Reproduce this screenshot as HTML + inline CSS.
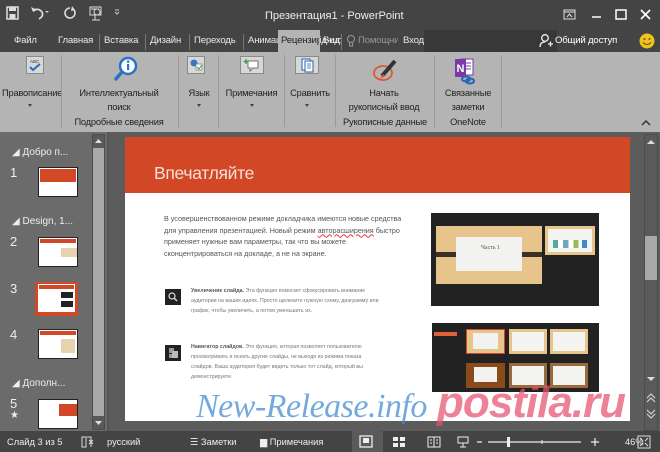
<!DOCTYPE html>
<html><head><meta charset="utf-8"><style>
*{margin:0;padding:0;box-sizing:border-box}
body{width:660px;height:452px;overflow:hidden;background:#5f5f5f;font-family:"Liberation Sans","DejaVu Sans",sans-serif;position:relative}
.a{position:absolute}
.t{color:#fff;font-size:11px;white-space:nowrap}
.tab{position:absolute;top:35px;font-size:9.6px;letter-spacing:-0.2px;color:#e8e8e8;white-space:nowrap}
.sep{position:absolute;top:34px;width:1px;height:16px;background:#777}
.rb{position:absolute;font-size:9.3px;letter-spacing:-0.2px;color:#222;text-align:center;white-space:nowrap;line-height:14px}
.rsep{position:absolute;top:55px;width:1px;height:72px;background:#999}
.ibox{position:absolute;background:#d8d8d8;border:1px solid #8a8a8a}
.arr{position:absolute;width:0;height:0;border-left:2.5px solid transparent;border-right:2.5px solid transparent;border-top:3px solid #444}
.thumb{position:absolute;left:38px;width:40px;height:30px;background:#fff;border:1px solid #222}
.num{position:absolute;left:10px;color:#eee;font-size:13px}
.sec{position:absolute;left:12px;color:#eee;font-size:10px;white-space:nowrap}
.st{position:absolute;top:437px;color:#eee;font-size:9.3px;white-space:nowrap}
.sm{font-size:5.3px;color:#777;line-height:10px}
</style></head><body>
<div class="a" style="left:0;top:0;width:660px;height:52px;background:#444"></div>
<svg class="a" style="left:0;top:0" width="130" height="28">
<rect x="7" y="7" width="11" height="12" fill="none" stroke="#ddd" stroke-width="1.5"/><rect x="9" y="7" width="7" height="4" fill="#ddd"/><rect x="9.5" y="14" width="6" height="5" fill="#ddd"/>
<path d="M33 10 q6 -2 9 2 q2 4 -3 7" stroke="#ddd" fill="none" stroke-width="1.6"/><path d="M31 7 l2 5 l4 -2z" fill="#ddd"/>
<path d="M45 11 l2 2 l2 -2z" fill="#ccc"/>
<path d="M70 8 a5 5 0 1 0 4 2" stroke="#ddd" fill="none" stroke-width="1.6"/><path d="M72 6 l3 4 l-4 1z" fill="#ddd"/>
<rect x="90" y="7" width="11" height="8" fill="none" stroke="#ddd"/><circle cx="97" cy="12" r="3" fill="none" stroke="#ddd"/><path d="M95 15 v5 M92 20 h8" stroke="#ddd"/>
<path d="M91 9 h8" stroke="#ddd"/>
<path d="M115 10 h4 M115 12 l2 2 l2 -2" stroke="#ccc" fill="none"/>
</svg>
<div class="t a" style="left:265px;top:10px;font-size:11px;color:#eee">Презентация1 - PowerPoint</div>
<svg class="a" style="left:560px;top:6px" width="100" height="20">
<rect x="4" y="4" width="11" height="9" fill="none" stroke="#ddd"/><path d="M4 6 h11 M7 11 l2.5 -3 l2.5 3" stroke="#ddd" fill="none"/>
<path d="M32 11 h9" stroke="#fff" stroke-width="1.5"/>
<rect x="56" y="4" width="10" height="9" fill="none" stroke="#fff" stroke-width="1.5"/>
<path d="M81 4 l9 9 M90 4 l-9 9" stroke="#fff" stroke-width="1.7"/>
</svg>
<div class="tab" style="left:14px">Файл</div>
<div class="tab" style="left:58px">Главная</div><div class="sep" style="left:99px"></div>
<div class="tab" style="left:104px">Вставка</div><div class="sep" style="left:145px"></div>
<div class="tab" style="left:150px">Дизайн</div><div class="sep" style="left:189px"></div>
<div class="tab" style="left:194px">Переходь</div><div class="sep" style="left:243px"></div>
<div class="tab" style="left:248px;width:45px;overflow:hidden">Анимации</div><div class="sep" style="left:294px"></div>
<div class="tab" style="left:299px;width:43px;overflow:hidden">Слайд-шоу</div>
<div class="a" style="left:278px;top:30px;width:42px;height:22px;background:#b4b4b4"></div>
<div class="tab" style="left:281px;color:#222;width:38px;overflow:hidden">Рецензир</div>
<div class="tab" style="left:323px">Вид</div><div class="sep" style="left:341px"></div>
<svg class="a" style="left:346px;top:33px" width="10" height="16"><circle cx="5" cy="6" r="3.5" fill="none" stroke="#999"/><path d="M3.5 10 v3 h3 v-3" stroke="#999" fill="none"/></svg>
<div class="tab" style="left:358px;color:#999;width:40px;overflow:hidden">Помощник</div>
<div class="tab" style="left:403px">Вход</div>
<div class="a" style="left:424px;top:30px;width:133px;height:22px;background:#383838"></div>
<svg class="a" style="left:539px;top:33px" width="14" height="16"><circle cx="6" cy="5" r="3.3" fill="none" stroke="#eee" stroke-width="1.3"/><path d="M1 14 q0 -5 5 -5 M9 11 h5 M11.5 8.5 v5" stroke="#eee" fill="none" stroke-width="1.3"/></svg>
<div class="tab" style="left:555px;color:#fff">Общий доступ</div>
<svg class="a" style="left:638px;top:32px" width="18" height="18"><circle cx="9" cy="9" r="7.5" fill="#f2c21b"/><circle cx="6.5" cy="7" r="1" fill="#553"/><circle cx="11.5" cy="7" r="1" fill="#553"/><path d="M5 10.5 q4 4 8 0" stroke="#553" fill="none"/></svg>
<div class="a" style="left:0;top:52px;width:660px;height:80px;background:#b4b4b4"></div>
<div class="ibox" style="left:26px;top:56px;width:18px;height:18px"></div>
<svg class="a" style="left:26px;top:56px" width="18" height="18"><text x="4" y="7" font-size="4.5" fill="#333" font-family="Liberation Sans">ABC</text><path d="M4 11 l3 3 l7 -6" stroke="#2a6ebb" stroke-width="2" fill="none"/></svg>
<div class="rb" style="left:2px;top:86px;width:56px">Правописание</div><div class="arr" style="left:28px;top:104px"></div>
<div class="rsep" style="left:61px"></div>
<svg class="a" style="left:112px;top:55px" width="28" height="30"><circle cx="16" cy="11" r="8" fill="#fff" stroke="#2a72c4" stroke-width="2.5"/><rect x="15" y="9" width="2.2" height="6" fill="#2a72c4"/><circle cx="16.1" cy="6.5" r="1.3" fill="#2a72c4"/><path d="M10 17 l-7 8" stroke="#2a72c4" stroke-width="3.5"/></svg>
<div class="rb" style="left:65px;top:86px;width:108px">Интеллектуальный<br>поиск</div>
<div class="rb" style="left:63px;top:115px;width:112px">Подробные сведения</div>
<div class="rsep" style="left:178px"></div>
<div class="ibox" style="left:187px;top:56px;width:18px;height:18px"></div>
<svg class="a" style="left:187px;top:56px" width="18" height="18"><circle cx="7" cy="7" r="3.5" fill="#3a76c6"/><rect x="9" y="8" width="6" height="6" fill="#fff" stroke="#666" stroke-width=".6"/><path d="M10 11 l2 2 l3 -4" stroke="#2a9c3a" fill="none"/></svg>
<div class="rb" style="left:181px;top:86px;width:36px">Язык</div><div class="arr" style="left:197px;top:104px"></div>
<div class="rsep" style="left:218px"></div>
<div class="ibox" style="left:240px;top:56px;width:24px;height:18px"></div>
<svg class="a" style="left:240px;top:56px" width="24" height="18"><rect x="8" y="5" width="10" height="7" fill="#fff" stroke="#555" stroke-width=".8"/><path d="M10 12 v3 l3 -3" fill="#fff" stroke="#555" stroke-width=".8"/><path d="M6 3 v5 M3.5 5.5 h5" stroke="#2a9c3a" stroke-width="1.3"/></svg>
<div class="rb" style="left:220px;top:86px;width:63px">Примечания</div><div class="arr" style="left:250px;top:104px"></div>
<div class="rsep" style="left:284px"></div>
<div class="ibox" style="left:295px;top:56px;width:24px;height:18px"></div>
<svg class="a" style="left:295px;top:56px" width="24" height="18"><rect x="7" y="3" width="8" height="11" fill="#fff" stroke="#2a60a8"/><rect x="10" y="5" width="8" height="11" fill="#fff" stroke="#2a60a8"/><path d="M12 8 h4 M12 10 h4 M12 12 h4" stroke="#2a60a8" stroke-width=".7"/></svg>
<div class="rb" style="left:286px;top:86px;width:48px">Сравнить</div><div class="arr" style="left:305px;top:104px"></div>
<div class="rsep" style="left:335px"></div>
<svg class="a" style="left:370px;top:56px" width="30" height="28"><ellipse cx="13" cy="17" rx="9" ry="7" fill="none" stroke="#e0502a" stroke-width="1.6"/><path d="M12 20 l13 -15" stroke="#333" stroke-width="4"/><path d="M10 23 l3 -5 l2 2z" fill="#e0502a"/></svg>
<div class="rb" style="left:338px;top:86px;width:92px">Начать<br>рукописный ввод</div>
<div class="rb" style="left:337px;top:115px;width:96px">Рукописные данные</div>
<div class="rsep" style="left:434px"></div>
<svg class="a" style="left:453px;top:56px" width="26" height="30"><rect x="8" y="3" width="12" height="16" fill="#fff" stroke="#7a3aa8"/><path d="M12 7 h6 M12 10 h6 M12 13 h6" stroke="#7a3aa8"/><rect x="2" y="3" width="11" height="18" fill="#7a3aa8"/><text x="3.5" y="16" font-size="11" fill="#fff" font-family="Liberation Sans" font-weight="bold">N</text><ellipse cx="13" cy="23" rx="4" ry="2.5" fill="none" stroke="#2a66b8" stroke-width="2"/><ellipse cx="17" cy="25" rx="4" ry="2.5" fill="none" stroke="#2a66b8" stroke-width="2"/></svg>
<div class="rb" style="left:437px;top:86px;width:62px">Связанные<br>заметки</div>
<div class="rb" style="left:437px;top:115px;width:62px">OneNote</div>
<div class="rsep" style="left:501px"></div>
<svg class="a" style="left:640px;top:118px" width="12" height="10"><path d="M2 7 l4 -4 l4 4" stroke="#333" fill="none" stroke-width="1.5"/></svg>
<div class="a" style="left:0;top:132px;width:660px;height:299px;background:#5c5c5c"></div>
<div class="a" style="left:0;top:132px;width:107px;height:299px;background:#6b6b6b"></div>
<div class="a" style="left:107px;top:132px;width:2px;height:299px;background:#555"></div>
<div class="a" style="left:92px;top:134px;width:13px;height:296px;background:#5a5a5a;border:1px solid #4c4c4c"></div>
<div class="a" style="left:93px;top:148px;width:11px;height:268px;background:#a9a9a9"></div>
<svg class="a" style="left:92px;top:134px" width="13" height="296"><path d="M3 9 l3.5 -4 l3.5 4z" fill="#ddd"/><path d="M3 287 l3.5 4 l3.5 -4z" fill="#ddd"/></svg>
<div class="sec" style="top:147px">◢ Добро п...</div>
<div class="num" style="top:165px">1</div>
<div class="thumb" style="top:167px"><div style="height:13px;background:#d24726;margin:1px"></div></div>
<div class="sec" style="top:216px">◢ Design, 1...</div>
<div class="num" style="top:234px">2</div>
<div class="thumb" style="top:237px"><div style="height:4px;background:#d24726;margin:1px"></div><div style="position:absolute;left:22px;top:10px;width:16px;height:9px;background:#e8d2b0"></div></div>
<div class="num" style="top:281px">3</div>
<div class="a" style="left:35px;top:282px;width:43px;height:34px;background:#d24726"></div>
<div class="thumb" style="top:284px;left:38px;width:37px;height:28px;border:none"><div style="height:4px;background:#d24726;margin:1px"></div><div style="position:absolute;left:23px;top:8px;width:12px;height:6px;background:#222"></div><div style="position:absolute;left:23px;top:17px;width:12px;height:6px;background:#222"></div></div>
<div class="num" style="top:327px">4</div>
<div class="thumb" style="top:329px"><div style="height:4px;background:#d24726;margin:1px"></div><div style="position:absolute;left:22px;top:9px;width:14px;height:14px;background:#e8d2b0"></div></div>
<div class="sec" style="top:378px">◢ Дополн...</div>
<div class="num" style="top:396px">5</div>
<div class="a" style="left:10px;top:410px;color:#eee;font-size:10px">★</div>
<div class="thumb" style="top:399px"><div style="position:absolute;left:20px;top:4px;width:18px;height:12px;background:#d24726"></div></div>
<div class="a" style="left:125px;top:137px;width:505px;height:284px;background:#fff"></div>
<div class="a" style="left:125px;top:137px;width:505px;height:56px;background:#d24726"></div>
<div class="a" style="left:154px;top:163px;color:#f6e0d8;font-size:17.5px;letter-spacing:-0.3px">Впечатляйте</div>
<div class="a" style="left:164px;top:213px;font-size:7.2px;color:#555;line-height:11.6px;width:260px">В усовершенствованном режиме докладчика имеются новые средства<br>для управления презентацией. Новый режим <span style="text-decoration:underline wavy #e33">авторасширения</span> быстро<br>применяет нужные вам параметры, так что вы можете<br>сконцентрироваться на докладе, а не на экране.</div>
<div class="a" style="left:165px;top:289px;width:16px;height:16px;background:#222"></div>
<svg class="a" style="left:165px;top:289px" width="16" height="16"><circle cx="7" cy="7" r="3" fill="none" stroke="#ddd" stroke-width="1.2"/><path d="M9 9 l3 3" stroke="#ddd" stroke-width="1.4"/></svg>
<div class="a sm" style="left:191px;top:286px;width:230px"><b style="color:#555">Увеличение слайда.</b> Эта функция помогает сфокусировать внимание<br>аудитории на ваших идеях. Просто щелкните нужную схему, диаграмму или<br>график, чтобы увеличить, а потом уменьшить их.</div>
<div class="a" style="left:165px;top:345px;width:16px;height:16px;background:#222"></div>
<svg class="a" style="left:165px;top:345px" width="16" height="16"><rect x="4" y="3" width="5" height="5" fill="#999"/><rect x="4" y="9" width="4" height="4" fill="#999"/><rect x="7" y="6" width="6" height="7" fill="#bbb"/></svg>
<div class="a sm" style="left:191px;top:342px;width:230px"><b style="color:#555">Навигатор слайдов.</b> Это функция, которая позволяет пользователю<br>просматривать и искать другие слайды, не выходя из режима показа<br>слайдов.  Ваша аудитория будет видеть только тот слайд, который вы<br>демонстрируете.</div>
<div class="a" style="left:431px;top:213px;width:168px;height:93px;background:#222"></div>
<div class="a" style="left:436px;top:226px;width:106px;height:58px;background:#e6c48c"></div>
<div class="a" style="left:456px;top:237px;width:66px;height:34px;background:#f2f2f0"></div>
<div class="a" style="left:436px;top:252px;width:20px;height:5px;background:#3a3028"></div>
<div class="a" style="left:522px;top:252px;width:20px;height:5px;background:#3a3028"></div>
<div class="a" style="left:481px;top:245px;font-size:6px;color:#555;font-family:'Liberation Serif',serif">Часть 1</div>
<div class="a" style="left:545px;top:226px;width:50px;height:29px;background:#e6c48c"></div>
<div class="a" style="left:548px;top:229px;width:44px;height:23px;background:#f4f4f0"></div>
<div class="a" style="left:553px;top:240px;width:34px;height:8px;background:linear-gradient(90deg,#5a9 0 15%,#fff 15% 30%,#6ab 30% 45%,#fff 45% 60%,#9b5 60% 75%,#fff 75% 85%,#48c 85%)"></div>
<div class="a" style="left:432px;top:323px;width:167px;height:69px;background:#222"></div>
<div class="a" style="left:434px;top:332px;width:23px;height:4px;background:#e0603a"></div>
<div class="a" style="left:466px;top:329px;width:39px;height:25px;background:#e6c48c;border:1px solid #d24726"></div>
<div class="a" style="left:509px;top:329px;width:38px;height:25px;background:#e6c48c"></div>
<div class="a" style="left:550px;top:329px;width:38px;height:25px;background:#e6c48c"></div>
<div class="a" style="left:466px;top:363px;width:39px;height:25px;background:#8a4a1a"></div>
<div class="a" style="left:509px;top:363px;width:38px;height:25px;background:#9a6a3a"></div>
<div class="a" style="left:550px;top:363px;width:38px;height:25px;background:#9a6a3a"></div>
<div class="a" style="left:473px;top:333px;width:25px;height:16px;background:#f2f2f0"></div>
<div class="a" style="left:512px;top:332px;width:32px;height:19px;background:#f4f4f0"></div>
<div class="a" style="left:553px;top:332px;width:32px;height:19px;background:#f4f4f0"></div>
<div class="a" style="left:474px;top:367px;width:23px;height:15px;background:#f2f2f0"></div>
<div class="a" style="left:512px;top:366px;width:32px;height:19px;background:#f4f4f0"></div>
<div class="a" style="left:553px;top:366px;width:32px;height:19px;background:#f4f4f0"></div>
<div class="a" style="left:644px;top:134px;width:14px;height:297px;background:#5a5a5a;border:1px solid #4c4c4c"></div>
<div class="a" style="left:645px;top:236px;width:12px;height:44px;background:#a9a9a9"></div>
<svg class="a" style="left:644px;top:134px" width="14" height="297"><path d="M3 10 l4 -4 l4 4z" fill="#ddd"/><path d="M3 243 l4 4 l4 -4z" fill="#ddd"/><path d="M3 264 l4 -4 l4 4 M3 268 l4 -4 l4 4" stroke="#ddd" fill="none"/><path d="M3 276 l4 4 l4 -4 M3 280 l4 4 l4 -4" stroke="#ddd" fill="none"/></svg>
<div class="a" style="left:196px;top:388px;font-family:'Liberation Serif',serif;font-style:italic;font-size:34px;color:rgba(70,140,210,.75);white-space:nowrap;letter-spacing:-0.5px">New-Release.info</div>
<div class="a" style="left:437px;top:378px;font-family:'Liberation Sans',sans-serif;font-weight:bold;font-style:italic;font-size:44px;color:rgba(230,80,110,.72);white-space:nowrap;letter-spacing:-1px">postila.ru</div>
<div class="a" style="left:0;top:431px;width:660px;height:21px;background:#444"></div>
<div class="a" style="left:352px;top:431px;width:31px;height:21px;background:#5a5a5a"></div>
<div class="st" style="left:7px">Слайд 3 из 5</div>
<svg class="a" style="left:80px;top:435px" width="14" height="14"><path d="M2 2 h4 v10 h-4z M7 2 h4 v10" stroke="#ddd" fill="none"/><path d="M9 5 l4 4 M13 5 l-4 4" stroke="#ddd"/></svg>
<div class="st" style="left:107px">русский</div>
<div class="st" style="left:190px">☰ Заметки</div>
<div class="st" style="left:260px">▆ Примечания</div>
<svg class="a" style="left:355px;top:433px" width="300" height="18">
<rect x="5" y="3" width="12" height="11" fill="none" stroke="#eee" stroke-width="1.3"/><rect x="8" y="5" width="6" height="5" fill="#eee"/>
<rect x="38" y="4" width="5" height="4" fill="#eee"/><rect x="45" y="4" width="5" height="4" fill="#eee"/><rect x="38" y="10" width="5" height="4" fill="#eee"/><rect x="45" y="10" width="5" height="4" fill="#eee"/>
<path d="M73 4 h12 v10 h-12z M79 4 v10 M75 7 h2 M81 7 h2 M75 10 h2 M81 10 h2" stroke="#eee" fill="none"/>
<path d="M103 4 h10 v6 h-10z M108 10 v4 M105 14 h6" stroke="#eee" fill="none"/>
<path d="M122 9 h5 M133 9 h93 M236 9 h8 M240 5 v8" stroke="#eee" stroke-width="1.2"/>
<rect x="152" y="4" width="3" height="10" fill="#eee"/><path d="M187 7 v4" stroke="#eee"/>
<rect x="283" y="3" width="12" height="12" fill="none" stroke="#ddd"/><path d="M285 5 l3 3 M293 5 l-3 3 M285 13 l3 -3 M293 13 l-3 -3" stroke="#ddd"/>
</svg>
<div class="st" style="left:625px">46%</div>
</body></html>
